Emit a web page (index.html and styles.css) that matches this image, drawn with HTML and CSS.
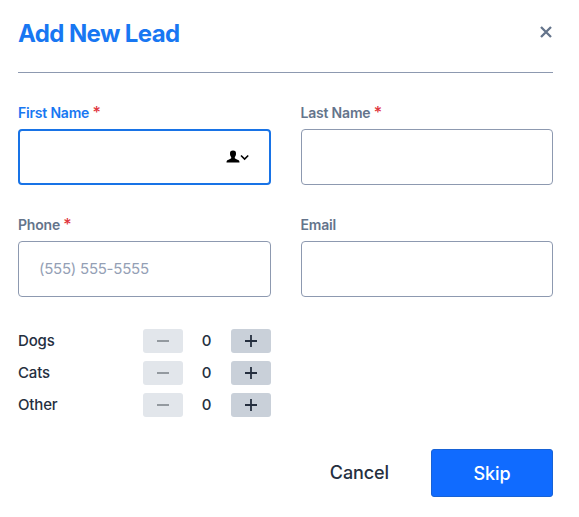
FILE: index.html
```html
<!DOCTYPE html>
<html lang="en">
<head>
<meta charset="utf-8">
<title>Add New Lead</title>
<link rel="stylesheet" href="styles.css">
</head>
<body>
<form class="dialog">
  <header class="header">
    <h1 class="title">Add New Lead</h1>
    <button class="close" type="button" aria-label="Close">
      <svg width="12" height="12" viewBox="0 0 12 12"><path d="M1 1l10 10M11 1L1 11" fill="none" stroke="currentColor" stroke-width="2.3"/></svg>
    </button>
  </header>
  <div class="fields">
    <div class="field active">
      <label class="label" for="first">First Name <span class="required">*</span></label>
      <div class="control">
        <input class="input" id="first" type="text">
        <svg class="contact" width="24" height="14" viewBox="0 0 24 14"><path d="M7 0.5c2.2 0 3.1 1.2 3 3.2 0 1.8-.7 2.6-1.2 3.4v1.2c.8.9 2.5 1.2 3.5 1.8.9.5 1.2 1.4 1.2 2.4H.5c0-1 .3-1.900 1.200-2.400 1-.6 2.700-.9 3.500-1.800V7.100C4.700 6.300 4 5.500 4 3.700 3.900 1.700 4.800.5 7 .5z" fill="#000"/><path d="M15 5.500l3.600 3.600L22.200 5.500" fill="none" stroke="#000" stroke-width="1.600"/></svg>
      </div>
    </div>
    <div class="field">
      <label class="label" for="last">Last Name <span class="required">*</span></label>
      <div class="control"><input class="input" id="last" type="text"></div>
    </div>
    <div class="field">
      <label class="label" for="phone">Phone <span class="required">*</span></label>
      <div class="control"><input class="input" id="phone" type="tel" placeholder="(555) 555-5555"></div>
    </div>
    <div class="field">
      <label class="label" for="email">Email</label>
      <div class="control"><input class="input" id="email" type="email"></div>
    </div>
  </div>
  <div class="counters">
    <div class="counter">
      <span class="name">Dogs</span>
      <button class="step minus" type="button" aria-label="Fewer dogs"><svg width="14" height="14" viewBox="0 0 14 14"><path d="M1 7h12"/></svg></button>
      <span class="count">0</span>
      <button class="step plus" type="button" aria-label="More dogs"><svg width="14" height="14" viewBox="0 0 14 14"><path d="M1 7h12M7 1v12"/></svg></button>
    </div>
    <div class="counter">
      <span class="name">Cats</span>
      <button class="step minus" type="button" aria-label="Fewer cats"><svg width="14" height="14" viewBox="0 0 14 14"><path d="M1 7h12"/></svg></button>
      <span class="count">0</span>
      <button class="step plus" type="button" aria-label="More cats"><svg width="14" height="14" viewBox="0 0 14 14"><path d="M1 7h12M7 1v12"/></svg></button>
    </div>
    <div class="counter">
      <span class="name">Other</span>
      <button class="step minus" type="button" aria-label="Fewer others"><svg width="14" height="14" viewBox="0 0 14 14"><path d="M1 7h12"/></svg></button>
      <span class="count">0</span>
      <button class="step plus" type="button" aria-label="More others"><svg width="14" height="14" viewBox="0 0 14 14"><path d="M1 7h12M7 1v12"/></svg></button>
    </div>
  </div>
  <footer class="actions">
    <button class="cancel" type="button">Cancel</button>
    <button class="skip" type="button">Skip</button>
  </footer>
</form>
</body>
</html>
```
FILE: styles.css
```css
* { box-sizing: border-box; }
body {
  margin: 0;
  background: #fff;
  font-family: Inter, "Liberation Sans", sans-serif;
  color: #252f3f;
}
button {
  border: 0;
  padding: 0;
  background: none;
  font-family: inherit;
  color: inherit;
}
svg { display: block; }
.dialog { width: 535px; margin-left: 18px; }
.header {
  display: flex;
  justify-content: space-between;
  height: 73px;
  padding-top: 18px;
  border-bottom: 1px solid #8d99b0;
}
.title {
  margin: 0;
  font-size: 24px;
  line-height: 32px;
  font-weight: 700;
  letter-spacing: -0.6px;
  color: #1877f2;
}
.close {
  height: 12px;
  margin: 8px 1px 0 0;
  color: #64748b;
}
.fields {
  display: grid;
  grid-template-columns: 252.5px 252.5px;
  justify-content: space-between;
  gap: 30px 0;
  padding-top: 30px;
}
.label {
  display: block;
  height: 20px;
  margin-bottom: 6px;
  font-size: 14px;
  line-height: 20px;
  font-weight: 600;
  letter-spacing: -0.2px;
  color: #64748b;
}
.field { height: 82px; }
.active .label { color: #1877f2; }
.required { font-size: 16px; font-weight: 500; line-height: 1; color: #e0343c; }
.control { position: relative; height: 56px; }
.input {
  display: block;
  width: 100%;
  height: 56px;
  padding: 0 20px 2px;
  border: 1px solid #8d99b0;
  border-radius: 4px;
  outline: 0;
  background: #fff;
  font: 400 15px/20px Inter, "Liberation Sans", sans-serif;
  letter-spacing: -0.25px;
  color: #252f3f;
}
.input::placeholder { color: #94a0b5; opacity: 1; }
.active .input { border: 2px solid #1873e6; }
.contact { position: absolute; right: 20.5px; top: 21px; }
.counters {
  display: grid;
  gap: 8px;
  width: 252.5px;
  padding-top: 32px;
}
.counter {
  display: grid;
  grid-template-columns: 124.5px 40px 48px 40px;
  align-items: center;
  height: 24px;
  font-size: 15px;
  font-weight: 500;
  letter-spacing: -0.15px;
}
.name, .count { padding-bottom: 2px; }
.count { text-align: center; }
.step {
  display: grid;
  place-items: center;
  height: 24px;
  border-radius: 3px;
}
.step path { fill: none; stroke: currentColor; stroke-width: 1.8; }
.minus { background: #e2e6eb; color: #8b9097; }
.plus { background: #c9d0d9; color: #252f3f; }
.actions {
  display: flex;
  justify-content: flex-end;
  gap: 42px;
  padding-top: 32px;
}
.cancel, .skip {
  height: 48px;
  font-size: 18px;
  font-weight: 500;
  letter-spacing: -0.1px;
}
.cancel { padding-bottom: 1px; }
.skip {
  width: 122px;
  border: 1px solid #1762d6;
  border-radius: 3px;
  background: #106bff;
  color: #fff;
}
```
